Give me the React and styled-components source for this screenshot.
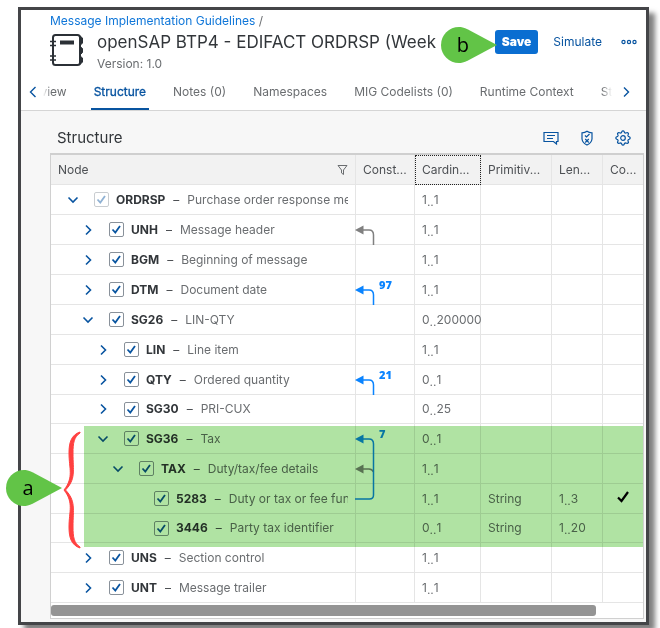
import React from "react";
import styled, { createGlobalStyle, css } from "styled-components";

const GlobalStyle = createGlobalStyle`
  * { box-sizing: border-box; }
  body {
    margin: 0;
    background: #fff;
    color: #6a6d70;
    font: 12px/16px Inter, "Liberation Sans", sans-serif;
  }
  button { font: inherit; }
`;

const Page = styled.div`
  padding: 7px 11px 4px 18px;
  overflow: hidden;
`;

const Window = styled.main`
  border: 3px solid #444548;
  background: #f7f7f7;
  box-shadow: 6px 6px 5px rgba(0, 0, 0, 0.5);
`;

const Header = styled.header`
  background: #fff;
  border-bottom: 1px solid #d5d5d5;
`;

const Breadcrumb = styled.nav`
  padding: 3px 0 0 29px;
  color: #6a6d70;
`;

const CrumbLink = styled.a`
  color: #0f76d8;
  text-decoration: none;
`;

const TitleBar = styled.div`
  display: flex;
  align-items: flex-start;
  padding: 0 5px 0 29px;
  height: 44px;
`;

const NotebookIcon = styled.svg`
  width: 33px;
  height: 34px;
  margin: 4px 14px 0 0;
  flex: none;
`;

const TitleText = styled.div`
  flex: 1;
  min-width: 0;
  white-space: nowrap;
`;

const Title = styled.h1`
  margin: 0;
  font-size: 17px;
  line-height: 26px;
  font-weight: 400;
  color: #32363a;
`;

const Version = styled.div`
  line-height: 18px;
`;

const Actions = styled.div`
  display: flex;
  align-items: center;
  padding-top: 1px;
`;

const SaveSlot = styled.div`
  position: relative;
  display: flex;
`;

const ActionButton = styled.button`
  height: 24px;
  border: 0;
  border-radius: 3px;
  background: transparent;
  color: #0854a0;
  padding: 0 15px;
  ${(p) =>
    p.$primary &&
    css`
      background: #0a6ed1;
      color: #fff;
      font-weight: 900;
      padding: 0 7px;
    `}
`;

const IconButton = styled.button`
  display: grid;
  place-items: center;
  width: ${(p) => p.$size || 16}px;
  height: ${(p) => p.$size || 16}px;
  padding: 0;
  border: 0;
  flex: none;
  background: transparent;
  color: #0854a0;
`;

const TabBar = styled.div`
  display: flex;
  align-items: center;
  height: 37px;
  padding: 0 12px 0 4px;
`;

const TabViewport = styled.div`
  flex: 1;
  min-width: 0;
  height: 37px;
  margin: 0 4px 0 2px;
  overflow: hidden;
  mask-image: linear-gradient(90deg, transparent, #000 8px, #000 calc(100% - 12px), transparent calc(100% - 2px));
`;

const TabList = styled.div`
  display: flex;
  gap: 21px;
  margin-left: -33px;
`;

const Tab = styled.button`
  flex: none;
  height: 37px;
  padding: 2px 3px 0;
  border: 0;
  border-bottom: 2px solid ${(p) => (p.$active ? "#0854a0" : "transparent")};
  background: transparent;
  color: ${(p) => (p.$active ? "#0854a0" : "#6a6d70")};
  ${(p) => p.$active && "-webkit-text-stroke: 0.3px #0854a0;"}
`;

const Toolbar = styled.div`
  display: flex;
  align-items: center;
  gap: 20px;
  height: 42px;
  padding: 12px 15px 0 36px;
`;

const SectionTitle = styled.h2`
  flex: 1;
  margin: 0;
  font-size: 15px;
  line-height: 20px;
  font-weight: 400;
  color: #32363a;
`;

const TableWrap = styled.div`
  position: relative;
  margin: 0 2px 3px 29px;
  border: 1px solid #d0d0d0;
  border-top: 2px solid #cfcfcf;
  background: #fff;
`;

const Table = styled.table`
  width: 100%;
  table-layout: fixed;
  border-collapse: separate;
  border-spacing: 0;
`;

const Col = styled.col`
  width: ${(p) => p.$width}px;
`;

const HeadCell = styled.th`
  height: 30px;
  padding: 0 7px;
  border-right: 1px solid #e5e5e5;
  border-bottom: 1px solid #e5e5e5;
  background: #f2f2f2;
  color: #4d5054;
  font-weight: 400;
  text-align: left;
  white-space: nowrap;
  ${(p) => p.$focused && "outline: 1px dotted #222; outline-offset: -1px;"}
  &:last-child { border-right: 0; }
`;

const NodeHead = styled.div`
  display: flex;
  justify-content: space-between;
  align-items: center;
`;

const Cell = styled.td`
  height: 30px;
  padding: 0 ${(p) => (p.$flush ? 0 : 7)}px;
  border-right: 1px solid #e5e5e5;
  border-bottom: 1px solid #e5e5e5;
  white-space: nowrap;
  &:last-child { border-right: 0; text-align: center; }
  tr:nth-child(4n) > & { height: 29px; }
`;

const Dots = styled.span`
  vertical-align: -2px;
  line-height: 1;
`;

const NodeBox = styled.div`
  display: flex;
  align-items: center;
  overflow: hidden;
  padding-left: ${(p) => 7 + p.$level * 15}px;
`;

const Spacer = styled.span`
  width: 16px;
  flex: none;
`;

const NodeLabel = styled.label`
  display: flex;
  align-items: center;
  margin-left: 13px;
`;

const CheckWrap = styled.span`
  display: grid;
  place-items: center;
  margin-right: 7px;
  opacity: ${(p) => (p.$dim ? 0.45 : 1)};
  > * { grid-area: 1 / 1; }
  svg { pointer-events: none; }
`;

const CheckInput = styled.input`
  appearance: none;
  width: 15px;
  height: 15px;
  margin: 0;
  border: 1px solid #89919a;
  border-radius: 2px;
  background: #fff;
`;

const Code = styled.b`
  color: #32363a;
  font-weight: 700;
`;

const Dash = styled.span`
  margin: 0 8px;
  color: #4d5054;
`;

const LinkBox = styled.div`
  display: flex;
  gap: 1px;
  height: 29px;
  svg { display: block; overflow: visible; flex: none; }
`;

const LinkCount = styled.span`
  padding-top: 2px;
  color: #0a84ff;
  font: 800 11px/16px "Open Sans", sans-serif;
`;

const ScrollTrack = styled.div`
  height: 15px;
  padding-top: 2px;
`;

const ScrollThumb = styled.div`
  width: 92%;
  height: 11px;
  border-radius: 3px;
  background: #949494;
`;

const Highlight = styled.div`
  position: absolute;
  top: 271px;
  left: 33px;
  right: 0;
  height: 121px;
  background: #b0e3a3;
  mix-blend-mode: multiply;
  pointer-events: none;
`;

const Brace = styled.svg`
  position: absolute;
  top: 276px;
  left: 12px;
`;

const CalloutBox = styled.div`
  position: absolute;
  top: ${(p) => p.$top}px;
  left: ${(p) => p.$left}px;
  display: grid;
  align-items: center;
  pointer-events: none;
  > * { grid-area: 1 / 1; }
`;

const CalloutLetter = styled.span`
  width: 44px;
  text-align: center;
  color: #000;
  font: 20px/24px "Open Sans", sans-serif;
`;

function Callout({ top, left, children }) {
  return (
    <CalloutBox $top={top} $left={left}>
      <svg width="56" height="36" aria-hidden="true">
        <path d="M56 18 L27 2.500 C23 .5 20 0 18 0 A18 18 0 0 0 18 36 C20 36 23 35.500 27 33.500Z" fill="#62c447" />
      </svg>
      <CalloutLetter>{children}</CalloutLetter>
    </CalloutBox>
  );
}

function Chevron({ dir, size = 12, stroke = 1.6 }) {
  const d = {
    down: "M1.500 3.500 L6 8 L10.500 3.500",
    right: "M4 1.500 L8.500 6 L4 10.500",
    left: "M8.500 1 L3.500 6 L8.500 11",
  }[dir];
  return (
    <svg width={size} height={size} viewBox="0 0 12 12" fill="none" stroke="currentColor" strokeWidth={stroke} aria-hidden="true">
      <path d={d} />
    </svg>
  );
}

function Checkbox({ dim }) {
  return (
    <CheckWrap $dim={dim}>
      <CheckInput type="checkbox" defaultChecked disabled={dim} />
      <svg width="11" height="11" fill="none" stroke="#0854a0" strokeWidth="1.8" aria-hidden="true">
        <path d="M1.500 5.500 L4.300 8.500 L9 2" />
      </svg>
    </CheckWrap>
  );
}

const BLUE = "#0a84ff";
const GREY = "#808080";

function ConstraintLink({ kind, count }) {
  const color = kind === "grey" ? GREY : BLUE;
  return (
    <LinkBox>
      <svg width="22" height="29" fill="none" strokeWidth="1.5" aria-hidden="true">
        {(kind === "blue" || kind === "grey") && (
          <>
            <path d="M7 15 H13 Q17.500 15 17.500 20 V30" stroke={color} />
            <path d="M-1 15 L7.500 10.500 V19.500Z" fill={color} />
          </>
        )}
        {kind === "pass" && (
          <>
            <path d="M7 15 H13 Q16 15 17.500 18" stroke={GREY} />
            <path d="M-1 15 L7.500 10.500 V19.500Z" fill={GREY} />
            <path d="M17.500 0 V30" stroke={BLUE} />
          </>
        )}
        {kind === "end" && <path d="M17.500 0 V11 Q17.500 15 13.500 15 H-1" stroke={BLUE} />}
      </svg>
      {count && <LinkCount>{count}</LinkCount>}
    </LinkBox>
  );
}

function Range({ value }) {
  if (!value) return null;
  const [low, high] = value.split("..");
  return (
    <>
      {low}
      <Dots>..</Dots>
      {high}
    </>
  );
}

const rows = [
  { level: 0, arrow: "down", code: "ORDRSP", name: "Purchase order response message", card: "1..1", dim: true },
  { level: 1, arrow: "right", code: "UNH", name: "Message header", card: "1..1", link: "grey" },
  { level: 1, arrow: "right", code: "BGM", name: "Beginning of message", card: "1..1" },
  { level: 1, arrow: "right", code: "DTM", name: "Document date", card: "1..1", link: "blue", count: 97 },
  { level: 1, arrow: "down", code: "SG26", name: "LIN-QTY", card: "0..200000" },
  { level: 2, arrow: "right", code: "LIN", name: "Line item", card: "1..1" },
  { level: 2, arrow: "right", code: "QTY", name: "Ordered quantity", card: "0..1", link: "blue", count: 21 },
  { level: 2, arrow: "right", code: "SG30", name: "PRI-CUX", card: "0..25" },
  { level: 2, arrow: "down", code: "SG36", name: "Tax", card: "0..1", link: "blue", count: 7 },
  { level: 3, arrow: "down", code: "TAX", name: "Duty/tax/fee details", card: "1..1", link: "pass" },
  { level: 4, code: "5283", name: "Duty or tax or fee function", card: "1..1", link: "end", type: "String", len: "1..3", coded: true },
  { level: 4, code: "3446", name: "Party tax identifier", card: "0..1", type: "String", len: "1..20" },
  { level: 1, arrow: "right", code: "UNS", name: "Section control", card: "1..1" },
  { level: 1, arrow: "right", code: "UNT", name: "Message trailer", card: "1..1" },
];

const tabs = ["Overview", "Structure", "Notes (0)", "Namespaces", "MIG Codelists (0)", "Runtime Context", "Status"];

const gearPath = Array.from({ length: 64 }, (_, i) => {
  const a = (i / 64) * Math.PI * 2;
  const r = 6.3 + 0.8 * Math.tanh(2.5 * Math.cos(a * 8));
  return `${i ? "L" : "M"}${(8 + r * Math.cos(a)).toFixed(2)} ${(8 + r * Math.sin(a)).toFixed(2)}`;
}).join(" ") + "Z";

export default function App() {
  return (
    <Page>
      <GlobalStyle />
      <Window>
        <Header>
          <Breadcrumb>
            <CrumbLink href="#guidelines">Message Implementation Guidelines</CrumbLink> /
          </Breadcrumb>
          <TitleBar>
            <NotebookIcon viewBox="0 0 33 34" fill="none" stroke="#2b3036" aria-hidden="true">
              <rect x="3" y="2" width="27" height="30" rx="2.500" strokeWidth="2" />
              <path d="M10 9.500 H24" strokeWidth="4" />
              <path d="M0 8.500 H6 M0 12.500 H6 M0 23 H6 M0 27 H6" strokeWidth="1.600" />
              <path d="M30 3 L32.500 5 V10 L30 12.500Z M30 13.500 L32.500 15.500 V19.500 L30 22Z M30 23 L32.500 25 V29 L30 31.500Z" fill="#2b3036" strokeWidth="1" />
            </NotebookIcon>
            <TitleText>
              <Title>openSAP BTP4 - EDIFACT ORDRSP (Week</Title>
              <Version>Version: 1.0</Version>
            </TitleText>
            <Actions>
              <SaveSlot>
                <ActionButton $primary>Save</ActionButton>
                <Callout top={-3} left={-54}>b</Callout>
              </SaveSlot>
              <ActionButton>Simulate</ActionButton>
              <IconButton aria-label="More actions" $size={24}>
                <svg width="16" height="6" fill="none" stroke="currentColor" strokeWidth="1.200" aria-hidden="true">
                  <circle cx="2.500" cy="3" r="1.600" />
                  <circle cx="8" cy="3" r="1.600" />
                  <circle cx="13.500" cy="3" r="1.600" />
                </svg>
              </IconButton>
            </Actions>
          </TitleBar>
          <TabBar>
            <IconButton aria-label="Previous tabs"><Chevron dir="left" stroke={1.4} /></IconButton>
            <TabViewport>
              <TabList role="tablist">
                {tabs.map((t) => (
                  <Tab key={t} role="tab" aria-selected={t === "Structure"} $active={t === "Structure"}>{t}</Tab>
                ))}
              </TabList>
            </TabViewport>
            <IconButton aria-label="Next tabs"><Chevron dir="right" stroke={1.4} /></IconButton>
          </TabBar>
        </Header>

        <Toolbar>
          <SectionTitle>Structure</SectionTitle>
          <IconButton aria-label="Comments">
            <svg width="16" height="16" fill="none" stroke="currentColor" strokeWidth="1.200" aria-hidden="true">
              <path d="M1 2.500 H15 V11.500 H13.500 V14 L10.500 11.500 H1Z M4 5.500 H12 M4 8.500 H10" />
            </svg>
          </IconButton>
          <IconButton aria-label="Validate">
            <svg width="16" height="16" fill="none" stroke="currentColor" strokeWidth="1.200" aria-hidden="true">
              <path d="M8 1.200 Q10 2.800 13 2.800 V9 Q12.500 13 8 15 Q3.500 13 3 9 V2.800 Q6 2.800 8 1.200Z" />
              <path d="M6 5.500 L7.500 7 L10.500 4 M6.200 9 L9.800 12.500 M9.800 9 L6.200 12.500" />
            </svg>
          </IconButton>
          <IconButton aria-label="Settings">
            <svg width="16" height="16" fill="none" stroke="currentColor" strokeWidth="1.200" aria-hidden="true">
              <path d={gearPath} />
              <circle cx="8" cy="8" r="2.300" />
            </svg>
          </IconButton>
        </Toolbar>

        <TableWrap>
          <Table>
            <colgroup>
              <col />
              <Col $width={59} />
              <Col $width={66} />
              <Col $width={71} />
              <Col $width={51} />
              <Col $width={40} />
            </colgroup>
            <thead>
              <tr>
                <HeadCell>
                  <NodeHead>
                    Node
                    <svg width="11" height="12" fill="none" stroke="#6a6d70" aria-hidden="true">
                      <path d="M1 1.500 H10 L6.500 6 V10.500 L4.500 9 V6Z" />
                    </svg>
                  </NodeHead>
                </HeadCell>
                <HeadCell>Const...</HeadCell>
                <HeadCell $focused>Cardin...</HeadCell>
                <HeadCell>Primitiv...</HeadCell>
                <HeadCell>Len...</HeadCell>
                <HeadCell>Co...</HeadCell>
              </tr>
            </thead>
            <tbody>
              {rows.map((r) => (
                <tr key={r.code}>
                  <Cell>
                    <NodeBox $level={r.level}>
                      {r.arrow ? (
                        <IconButton aria-label={`Toggle ${r.code}`}><Chevron dir={r.arrow} /></IconButton>
                      ) : (
                        <Spacer />
                      )}
                      <NodeLabel>
                        <Checkbox dim={r.dim} />
                        <Code>{r.code}</Code>
                        <Dash>–</Dash>
                        {r.name}
                      </NodeLabel>
                    </NodeBox>
                  </Cell>
                  <Cell $flush>{r.link && <ConstraintLink kind={r.link} count={r.count} />}</Cell>
                  <Cell><Range value={r.card} /></Cell>
                  <Cell>{r.type}</Cell>
                  <Cell><Range value={r.len} /></Cell>
                  <Cell>
                    {r.coded && (
                      <svg width="12" height="12" fill="none" stroke="#000" strokeWidth="2.200" role="img" aria-label="Yes">
                        <path d="M1 6.500 L4.500 10 L11 1" />
                      </svg>
                    )}
                  </Cell>
                </tr>
              ))}
            </tbody>
          </Table>
          <ScrollTrack><ScrollThumb /></ScrollTrack>
          <Highlight />
          <Brace width="18" height="118" fill="#ff4040" aria-hidden="true">
            <path d="M17 1 C8 4 6 12 6 22 C6 38 11 46 1 59 C11 72 6 80 6 96 C6 106 8 114 17 117 L17 116 C11 112 10 106 10 96 C10 78 13 70 2.500 59 C13 48 10 40 10 22 C10 12 11 6 17 2Z" stroke="#ff4040" />
          </Brace>
          <Callout top={315} left={-45}>a</Callout>
        </TableWrap>
      </Window>
    </Page>
  );
}
